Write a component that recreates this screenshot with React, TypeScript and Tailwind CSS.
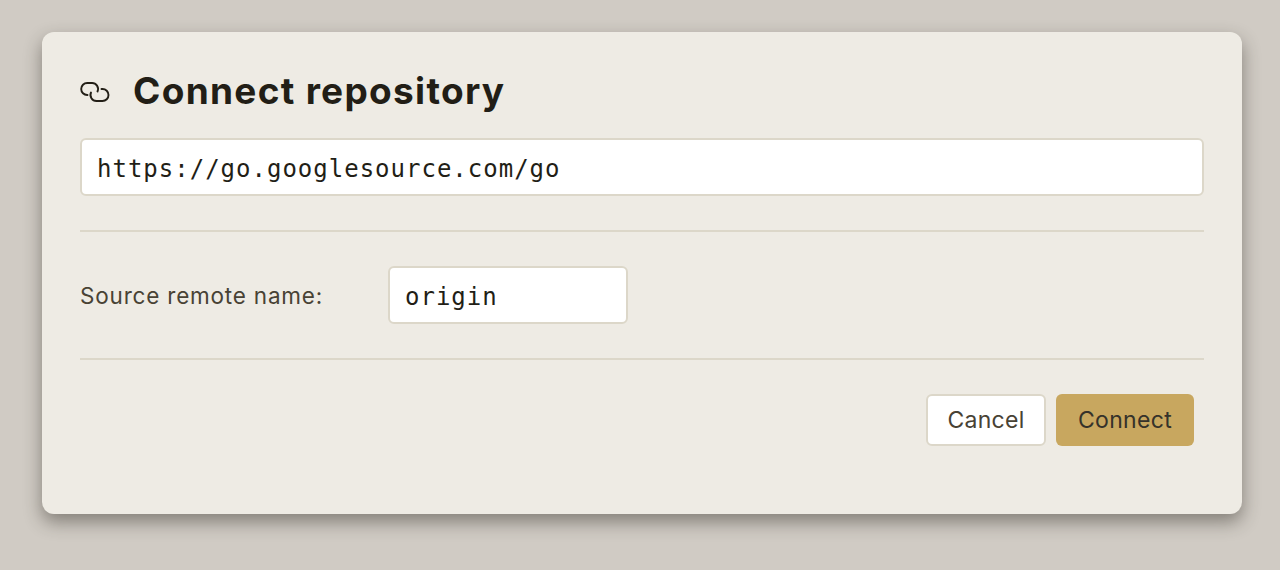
function LinkIcon() {
  return (
    <svg width="32" height="22" viewBox="0.5 0 32 22" fill="none" stroke="#221e16" strokeWidth="1.9" strokeLinecap="round" className="shrink-0">
      <path d="M8 15H7.7A6 6 0 0 1 7.7 3H12.3A6 6 0 0 1 18 11.5" />
      <path d="M22 9H23A6 6 0 0 1 23 21H17A6 6 0 0 1 11.5 12.5" />
    </svg>
  );
}

export default function App() {
  return (
    <div className="h-[570px] bg-[#d0cbc4] px-[42px] pt-[32px] font-['Inter',sans-serif]">
      <div className="h-[482px] w-[1200px] rounded-[12px] bg-[#eeebe4] px-[38px] pt-[36px] shadow-[0_8px_18px_rgba(40,36,28,0.45)]">
        <div className="flex h-[46px] items-center">
          <LinkIcon />
          <h1 className="ml-[21px] text-[37px] font-bold leading-[46px] tracking-[1.3px] text-[#221e16]">Connect repository</h1>
        </div>

        <div className="mt-[24px] flex h-[58px] items-center rounded-[6px] border-2 border-[#dcd7c9] bg-white px-[15px] pt-[4px] font-['DejaVu_Sans_Mono',monospace] text-[24px] tracking-[1px] text-[#221e16]">
          https://go.googlesource.com/go
        </div>

        <div className="mt-[34px] h-[2px] bg-[#dcd7c9]" />

        <div className="mt-[34px] flex items-center">
          <label className="w-[308px] pt-[2px] text-[22.5px] tracking-[0.8px] text-[#484234]">Source remote name:</label>
          <div className="flex h-[58px] w-[240px] items-center rounded-[6px] border-2 border-[#dcd7c9] bg-white px-[15px] pt-[4px] font-['DejaVu_Sans_Mono',monospace] text-[24px] tracking-[1px] text-[#221e16]">
            origin
          </div>
        </div>

        <div className="mt-[34px] h-[2px] bg-[#dcd7c9]" />

        <div className="mt-[34px] flex justify-end gap-[10px] pr-[10px]">
          <button className="h-[52px] w-[120px] rounded-[6px] border-2 border-[#dcd7c9] bg-white text-[23px] tracking-[0.3px] text-[#484234]">Cancel</button>
          <button className="h-[52px] w-[138px] rounded-[6px] bg-[#c8a75f] text-[23px] tracking-[0.3px] text-[#35322a]">Connect</button>
        </div>
      </div>
    </div>
  );
}
